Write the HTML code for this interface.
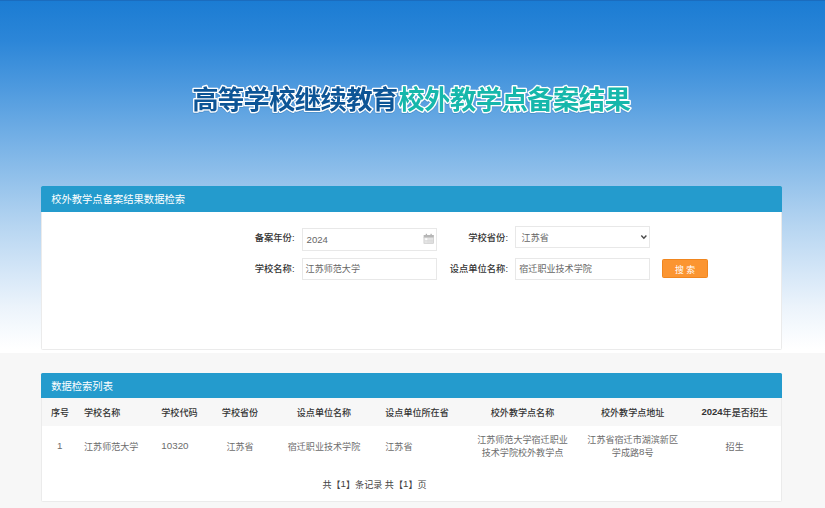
<!DOCTYPE html>
<html lang="zh-CN">
<head>
<meta charset="utf-8">
<title>高等学校继续教育校外教学点备案结果</title>
<style>
*{box-sizing:border-box;margin:0;padding:0}
html,body{width:825px;height:508px;overflow:hidden}
body{position:relative;background:#f7f7f7;font-family:"Liberation Sans","Noto Sans CJK SC",sans-serif;font-size:9.07px;color:#666}
.sky{position:absolute;left:0;top:0;width:825px;height:352.5px;border-top:1px solid #1b6cbe;background:linear-gradient(to bottom,#1b7cd3 0px,#2c86d8 40px,#509bdf 90px,#76b1e6 140px,#94c2eb 180px,#b6d5f1 225px,#d4e6f7 270px,#ebf3fb 305px,#f8fbfe 332px,#ffffff 348px)}
.title{position:absolute;left:0;top:70px;width:825px;height:60px}
.title text{font-family:"Liberation Sans","Noto Sans CJK SC",sans-serif;font-weight:700;font-size:26.4px}
.panel{position:absolute;left:41.2px;width:740.5px;background:#fff;border:1px solid #ebebeb;border-radius:1.5px}
.ph{border-radius:1.5px 1.5px 0 0;position:absolute;left:-1px;top:-1px;right:-1px;height:25.5px;background:#249bcd;color:#fff;font-size:10.3px;line-height:22.5px;padding:3px 0 0 10px}
#p1{top:186px;height:163.5px}
#p2{top:372.5px;height:129.2px}
.lbl{position:absolute;color:#333;font-weight:500;font-size:9.3px;line-height:22px;text-align:right;white-space:nowrap}
.inp{position:absolute;height:22.3px;border:1px solid #e8e8e8;background:#fff;color:#666;font-size:9.07px;line-height:20.8px;padding-left:3px;white-space:nowrap}
.btn{position:absolute;left:662.4px;top:259px;width:45.2px;height:19.3px;background:#fb9531;border:1px solid #f0861f;border-radius:1.5px;color:#fff;font-size:8.9px;line-height:21px;overflow:hidden;text-align:center}
.th{position:absolute;left:0;top:24.5px;width:738.5px;height:28px;background:#f7f7f7}
.c{position:absolute;white-space:nowrap;line-height:13.2px}
.h{color:#333;font-weight:500;top:407px}
.b{color:#6c6c6c}
.n{font-size:9.8px;line-height:0;position:relative;top:-1px}
.h .n{font-weight:700;font-size:9.5px}
.ctr{transform:translateX(-50%);text-align:center}
</style>
</head>
<body>
<div class="sky"></div>
<svg class="title" viewBox="0 0 825 60">
<defs><filter id="sh" x="-5%" y="-20%" width="110%" height="150%"><feDropShadow dx="0" dy="0.6" stdDeviation="0.6" flood-color="#0a3a66" flood-opacity="0.28"/></filter></defs>
<g filter="url(#sh)" stroke="#fff" stroke-width="2.7" stroke-linejoin="round" paint-order="stroke fill">
<text x="192.2" y="38.8" fill="#0d5496" textLength="206" lengthAdjust="spacing">高等学校继续教育</text>
<text x="398.4" y="38.8" fill="#19b7ab" textLength="232.4" lengthAdjust="spacing">校外教学点备案结果</text>
</g>
</svg>

<div class="panel" id="p1"><div class="ph">校外教学点备案结果数据检索</div></div>
<div class="lbl" style="right:530.5px;top:226.7px">备案年份:</div>
<div class="inp" style="left:302px;top:228.3px;width:135px;padding-left:3.6px"><span class="n" style="font-size:9.6px;top:0.6px">2024</span></div>
<svg style="position:absolute;left:423px;top:233px;width:12px;height:12px" viewBox="0 0 12 12"><g transform="translate(0.45 0.8)"><rect x="2.3" y="0" width="1.3" height="2" fill="#b0b0b0"/><rect x="7" y="0" width="1.3" height="2" fill="#b0b0b0"/><rect x="0.2" y="1.2" width="10.2" height="2.6" fill="#b7b7b7"/><rect x="0.5" y="3.8" width="9.6" height="5.7" fill="#ebebeb" stroke="#c6c6c6" stroke-width="0.7"/><rect x="1.8" y="4.6" width="2.2" height="1.7" fill="#fff"/><path d="M4.6 4v5.4M6.6 4v5.4M8.5 4v5.4M1 6.6h9M1 8.1h9" stroke="#d0d0d0" stroke-width="0.5" fill="none"/></g></svg>
<div class="lbl" style="right:530.5px;top:257.7px">学校名称:</div>
<div class="inp" style="left:302px;top:257.5px;width:135px;padding-left:2.6px">江苏师范大学</div>

<div class="lbl" style="right:317px;top:226.6px">学校省份:</div>
<div class="inp" style="left:515.3px;top:226.2px;width:135px;padding-left:5.3px;line-height:23.2px">江苏省</div>
<svg style="position:absolute;left:640px;top:234px;width:8px;height:7px" viewBox="0 0 8 7"><path d="M1.3 1.6L3.85 4.15L6.4 1.6" fill="none" stroke="#4a4a4a" stroke-width="1.45"/></svg>
<div class="lbl" style="right:317px;top:257.7px">设点单位名称:</div>
<div class="inp" style="left:515.3px;top:257.5px;width:135px">宿迁职业技术学院</div>
<div class="btn">搜 索</div>

<div class="panel" id="p2"><div class="ph">数据检索列表</div><div class="th"></div></div>
<div class="c h" style="left:51px">序号</div>
<div class="c h" style="left:84px">学校名称</div>
<div class="c h" style="left:161.3px">学校代码</div>
<div class="c h ctr" style="left:240px">学校省份</div>
<div class="c h ctr" style="left:324px">设点单位名称</div>
<div class="c h" style="left:385.3px">设点单位所在省</div>
<div class="c h ctr" style="left:522.5px">校外教学点名称</div>
<div class="c h ctr" style="left:632.7px">校外教学点地址</div>
<div class="c h ctr" style="left:734.7px"><span class="n">2024</span>年是否招生</div>

<div class="c b ctr" style="left:59.7px;top:440.6px"><span class="n">1</span></div>
<div class="c b" style="left:84px;top:440.6px">江苏师范大学</div>
<div class="c b" style="left:161.3px;top:440.6px"><span class="n">10320</span></div>
<div class="c b ctr" style="left:240px;top:440.6px">江苏省</div>
<div class="c b ctr" style="left:324px;top:440.6px">宿迁职业技术学院</div>
<div class="c b" style="left:385.3px;top:440.6px">江苏省</div>
<div class="c b ctr" style="left:522.5px;top:434.1px">江苏师范大学宿迁职业<br>技术学院校外教学点</div>
<div class="c b ctr" style="left:632.7px;top:434.1px">江苏省宿迁市湖滨新区<br>学成路<span class="n">8</span>号</div>
<div class="c b ctr" style="left:734.7px;top:440.6px">招生</div>
<div class="c ctr" style="left:374.5px;top:478.7px;color:#444">共【<span class="n">1</span>】条记录 共【<span class="n">1</span>】页</div>
</body>
</html>
